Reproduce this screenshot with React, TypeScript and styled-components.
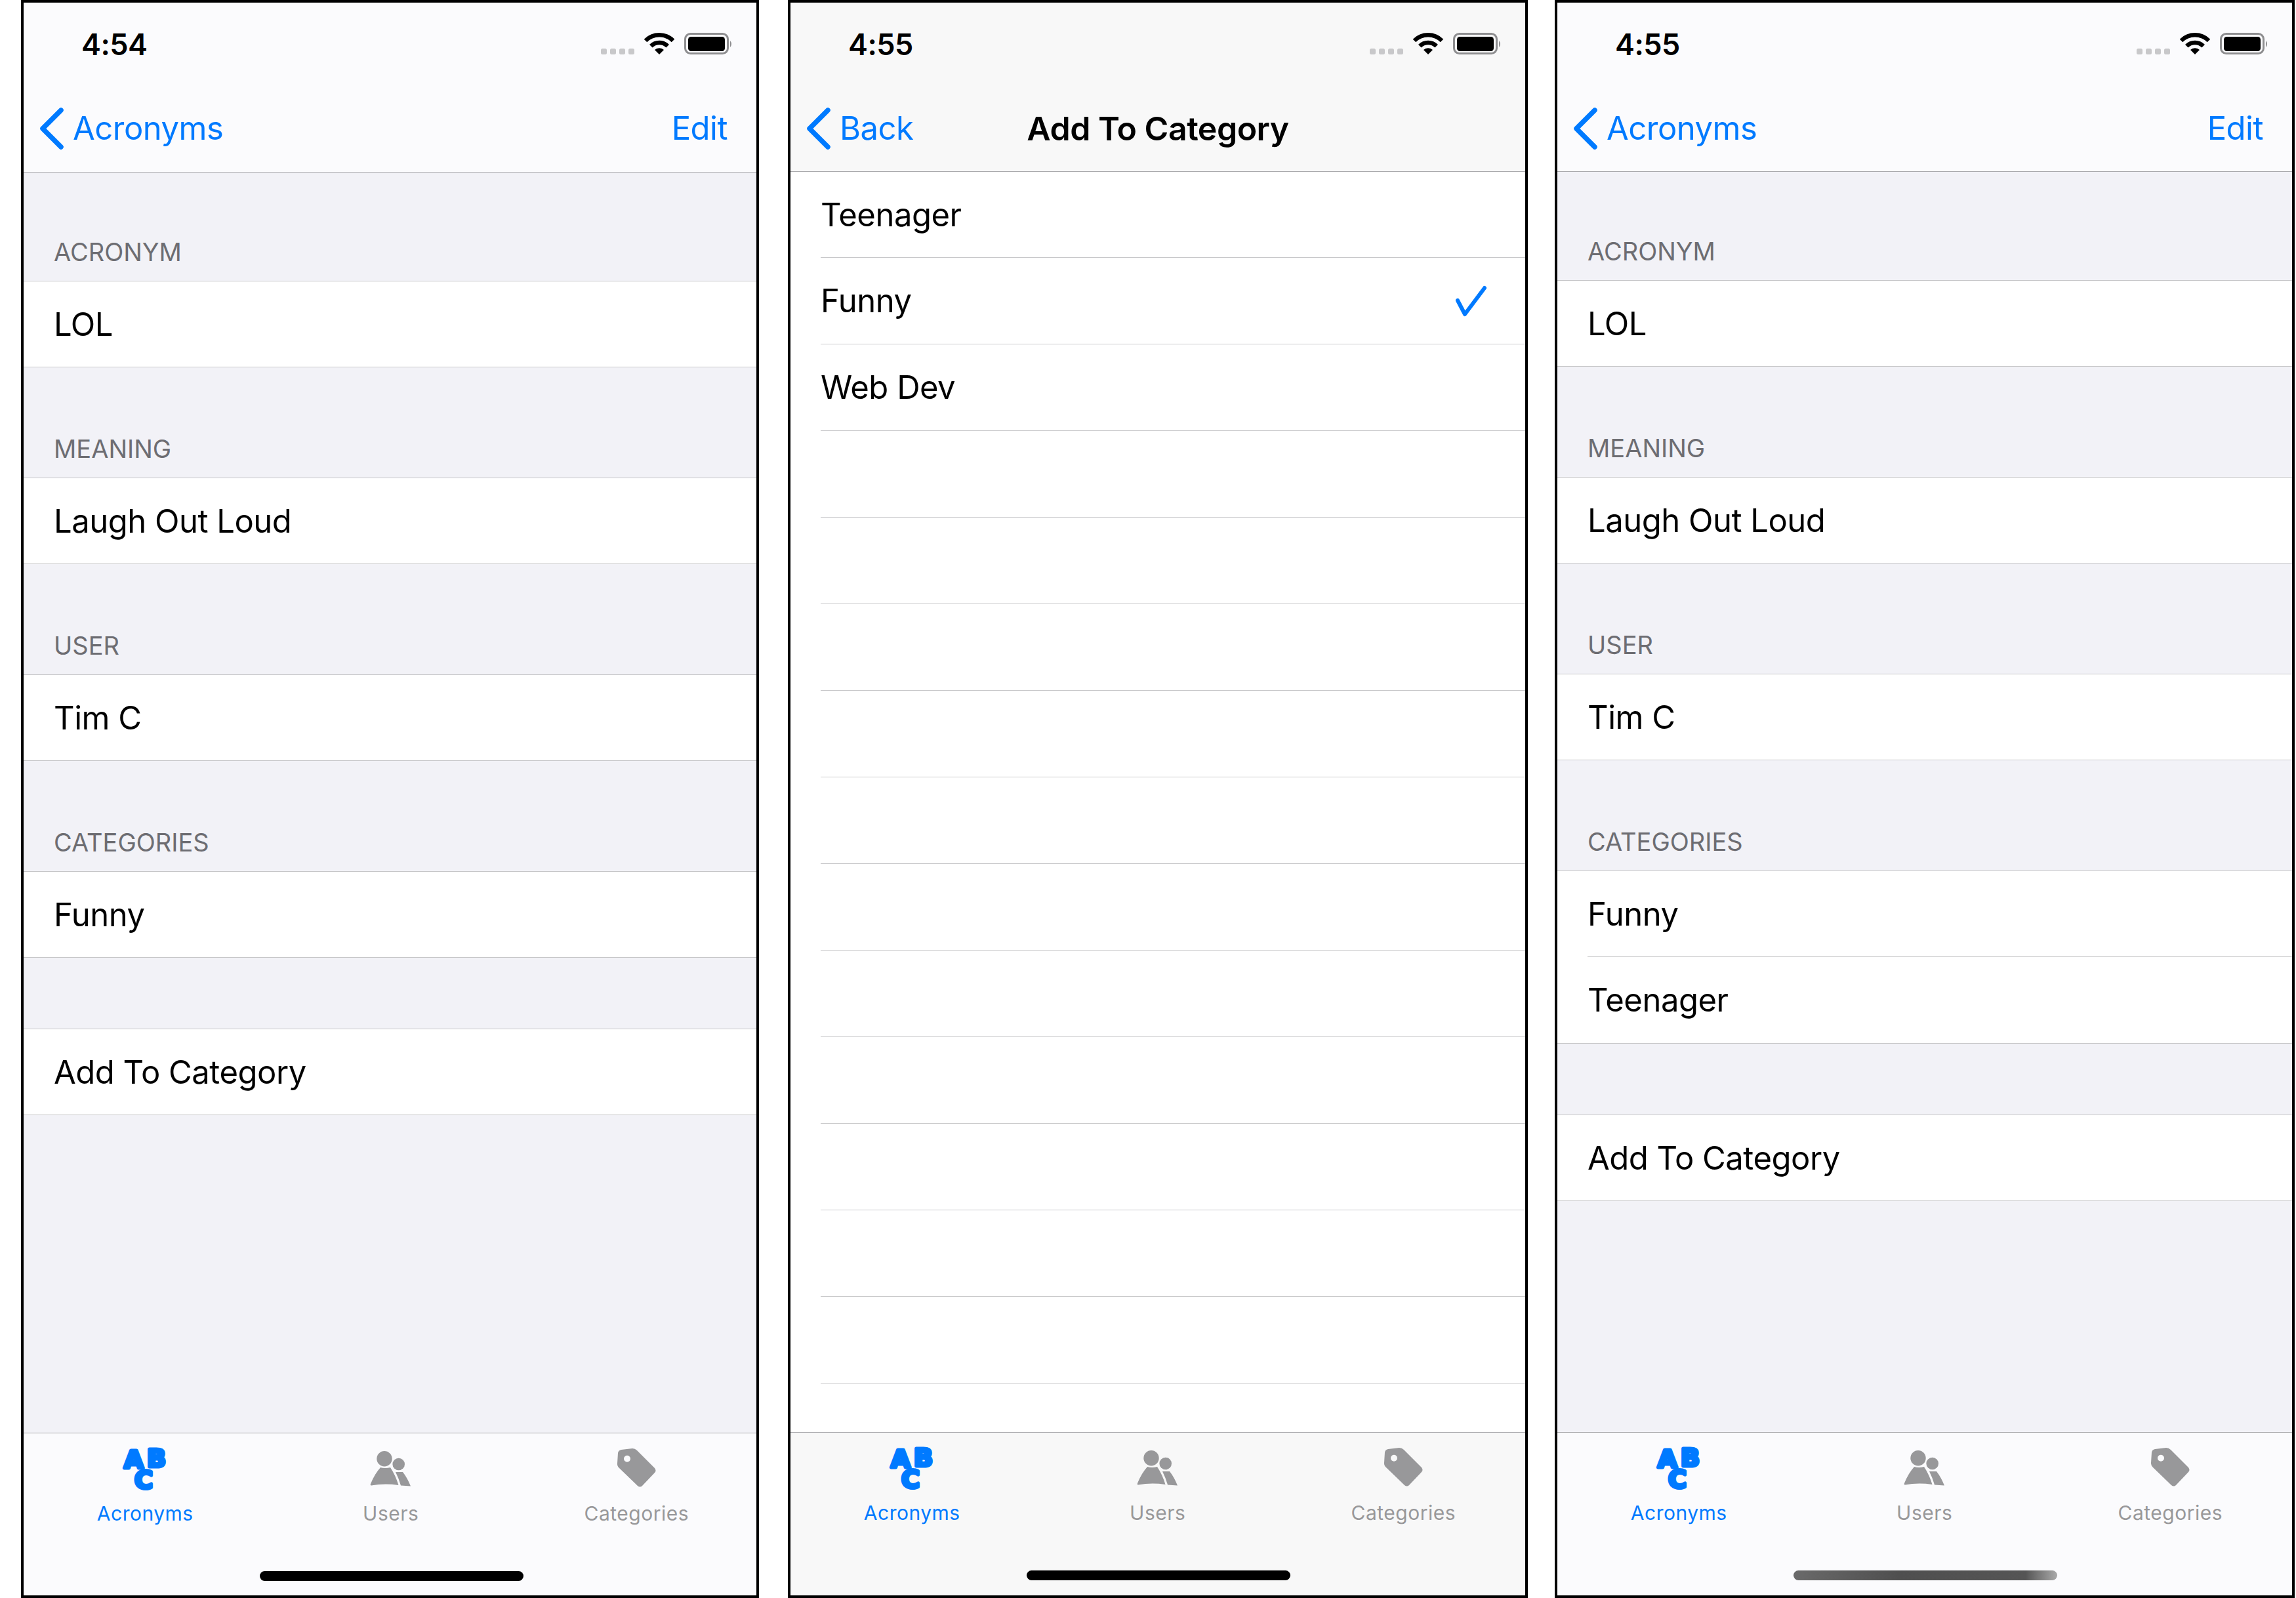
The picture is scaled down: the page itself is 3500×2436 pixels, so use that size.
import React from 'react';
import styled, { createGlobalStyle } from 'styled-components';

const GlobalStyle = createGlobalStyle`
  html, body {
    margin: 0;
    padding: 0;
    background: #fff;
  }
  body {
    font-family: Inter, "Liberation Sans", sans-serif;
    width: 3500px;
    height: 2436px;
    overflow: hidden;
  }
`;

const Page = styled.div`
  display: flex;
`;

const Phone = styled.div<{ $width: number; $left: number }>`
  box-sizing: border-box;
  flex: none;
  width: ${(p) => p.$width}px;
  margin-left: ${(p) => p.$left}px;
  height: 2436px;
  border: 4px solid #000;
  display: flex;
  flex-direction: column;
  overflow: hidden;
  background: #fff;
`;

const Header = styled.div<{ $bg: string; $height: number }>`
  background: ${(p) => p.$bg};
  border-bottom: 1px solid #a9a9ac;
  height: ${(p) => p.$height}px;
  box-sizing: border-box;
  flex: none;
`;

const StatusRow = styled.div`
  height: 126px;
  display: flex;
  align-items: center;
  justify-content: space-between;
  padding: 0 37px 0 88px;
`;

const Time = styled.div`
  font-size: 45px;
  font-weight: 600;
  color: #000;
  letter-spacing: -0.5px;
`;

const NavRow = styled.div`
  position: relative;
  height: 131px;
  display: flex;
  align-items: center;
  justify-content: space-between;
  padding: 0 44px 0 25px;
`;

const BackLink = styled.div`
  display: flex;
  align-items: center;
  gap: 10px;
  font-size: 49px;
  letter-spacing: -0.5px;
  color: #007aff;
`;

const NavTitle = styled.div`
  position: absolute;
  left: 0;
  right: 0;
  text-align: center;
  font-size: 50px;
  font-weight: 600;
  letter-spacing: -0.5px;
  color: #000;
`;

const EditLink = styled.div`
  font-size: 49px;
  letter-spacing: -0.5px;
  color: #007aff;
`;

const Grouped = styled.div`
  flex: 1;
  background: #f2f2f7;
  overflow: hidden;
`;

const Plain = styled.div`
  flex: 1;
  background: #fff;
  overflow: hidden;
`;

const SectionTitle = styled.div<{ $height: number }>`
  height: ${(p) => p.$height}px;
  box-sizing: border-box;
  display: flex;
  align-items: flex-end;
  padding: 0 46px 21px 46px;
  font-size: 38px;
  line-height: 46px;
  color: #6d6d72;
`;

const Group = styled.div`
  background: #fff;
  border-top: 1px solid #c6c6c8;
`;

const Row = styled.div`
  box-sizing: border-box;
  height: 132px;
  padding-left: 46px;
  display: flex;

  &:first-child {
    height: 131px;
  }
`;

const RowInner = styled.div<{ $line: string }>`
  flex: 1;
  box-sizing: border-box;
  display: flex;
  align-items: center;
  justify-content: space-between;
  padding-right: 59px;
  font-size: 49px;
  letter-spacing: -0.5px;
  color: #000;
  border-bottom: 1px solid ${(p) => p.$line};
`;

const FullRow = styled(Row)`
  padding-left: 0;
  ${RowInner} {
    padding-left: 46px;
  }
`;

const TabBar = styled.div<{ $bg: string; $height: number }>`
  flex: none;
  height: ${(p) => p.$height}px;
  box-sizing: border-box;
  background: ${(p) => p.$bg};
  border-top: 1px solid #a9a9ac;
  display: flex;
  flex-direction: column;
`;

const Tabs = styled.div`
  display: grid;
  grid-template-columns: repeat(3, 374.5px);
  margin-left: -2px;
  height: 210px;
`;

const Tab = styled.div<{ $active?: boolean }>`
  display: flex;
  flex-direction: column;
  align-items: center;
  color: ${(p) => (p.$active ? '#007aff' : '#98989a')};
`;

const TabIcon = styled.svg`
  display: block;
  width: 90px;
  height: 74px;
  margin-top: 17px;
  overflow: visible;
`;

const TabLabel = styled.div`
  font-size: 30px;
  line-height: 36px;
  font-weight: 400;
  letter-spacing: 0.5px;
  margin-top: 13px;
`;

const HomeIndicator = styled.div<{ $fade?: boolean }>`
  width: 402px;
  height: 15px;
  border-radius: 8px;
  margin-left: 360px;
  background: ${(p) =>
    p.$fade ? 'linear-gradient(90deg, #6a6a6a, #4f4f4f 40%, #555 88%, #aaa)' : '#000'};
`;

const StatusIcons = () => (
  <svg width="200" height="40" viewBox="0 0 200 40">
    <g fill="#c8c8ca">
      <rect x="0" y="27" width="9" height="9" rx="2.5" />
      <rect x="14" y="27" width="9" height="9" rx="2.5" />
      <rect x="28" y="27" width="9" height="9" rx="2.5" />
      <rect x="42" y="27" width="9" height="9" rx="2.5" />
    </g>
    <g fill="none" stroke="#000" strokeWidth="6.5">
      <path d="M68 15 A29.7 29.7 0 0 1 110 15" />
      <path d="M76.3 23.3 A18 18 0 0 1 101.7 23.3" />
    </g>
    <path d="M89 36 L82 29 A10 10 0 0 1 96 29 Z" fill="#000" />
    <rect x="128.5" y="4.5" width="65" height="30" rx="8" fill="none" stroke="#8e8e90" strokeWidth="3" />
    <rect x="133" y="9" width="56" height="22" rx="4.5" fill="#000" />
    <path d="M197 15 Q201 20 197 25 Z" fill="#8e8e90" />
  </svg>
);

const Chevron = () => (
  <svg width="40" height="66" viewBox="0 0 40 66">
    <path d="M32 5 L4 33 L32 61" fill="none" stroke="#007aff" strokeWidth="7.5" strokeLinecap="round" strokeLinejoin="round" />
  </svg>
);

const Check = () => (
  <svg width="48" height="48" viewBox="0 0 48 48">
    <path d="M4 23 L15 44 L45 4" fill="none" stroke="#007aff" strokeWidth="6" strokeLinecap="round" strokeLinejoin="round" />
  </svg>
);

const AbcIcon = () => (
  <TabIcon viewBox="0 0 90 74">
    <g
      fill="currentColor"
      stroke="currentColor"
      strokeWidth="5"
      strokeLinejoin="round"
      fontFamily="'DejaVu Sans', sans-serif"
      fontWeight="700"
      fontSize="38"
    >
      <text x="13" y="36">A</text>
      <text x="48" y="34">B</text>
      <text x="29" y="67">C</text>
    </g>
  </TabIcon>
);

const UsersIcon = () => (
  <TabIcon viewBox="0 0 90 74">
    <g fill="currentColor">
      <circle cx="35" cy="21.7" r="11.7" />
      <circle cx="56.7" cy="30" r="9.3" />
      <path d="M29 35 Q36 37 44 35 Q52 47 56.5 62 Q35 59 15 62.5 Q13 62.5 14 60 Q20 45 29 35 Z" />
      <path d="M52 42 L63 42 Q70 51 75 63.5 L60 62.5 Q57 52 52 42 Z" />
    </g>
  </TabIcon>
);

const TagIcon = () => (
  <TabIcon viewBox="0 0 90 74">
    <path
      fillRule="evenodd"
      fill="currentColor"
      d="M22 8 L39 6 Q43 6 46 9 L73 36 Q76 40 73 43 L54 63 Q50.7 66 47 63 L19 36 Q15.7 33 16 29 L17 13 Q17.5 9 22 8 Z M31 16.7 A5 5 0 1 0 31 26.7 A5 5 0 1 0 31 16.7 Z"
    />
  </TabIcon>
);

const Bottom = ({ bg, height, fade }: { bg: string; height: number; fade?: boolean }) => (
  <TabBar $bg={bg} $height={height}>
    <Tabs>
      <Tab $active>
        <AbcIcon />
        <TabLabel>Acronyms</TabLabel>
      </Tab>
      <Tab>
        <UsersIcon />
        <TabLabel>Users</TabLabel>
      </Tab>
      <Tab>
        <TagIcon />
        <TabLabel>Categories</TabLabel>
      </Tab>
    </Tabs>
    <HomeIndicator $fade={fade} />
  </TabBar>
);

type DetailProps = {
  time: string;
  rows: string[];
  width: number;
  left: number;
  headerHeight: number;
  tabHeight: number;
  fade?: boolean;
};

const Detail = ({ time, rows, width, left, headerHeight, tabHeight, fade }: DetailProps) => {
  const sections = [
    { title: 'ACRONYM', items: ['LOL'] },
    { title: 'MEANING', items: ['Laugh Out Loud'] },
    { title: 'USER', items: ['Tim C'] },
    { title: 'CATEGORIES', items: rows },
  ];
  return (
    <Phone $width={width} $left={left}>
      <Header $bg="#fbfbfd" $height={headerHeight}>
        <StatusRow>
          <Time>{time}</Time>
          <StatusIcons />
        </StatusRow>
        <NavRow>
          <BackLink>
            <Chevron />
            Acronyms
          </BackLink>
          <EditLink>Edit</EditLink>
        </NavRow>
      </Header>
      <Grouped>
        {sections.map((s, i) => (
          <React.Fragment key={s.title}>
            <SectionTitle $height={i === 0 ? 165 : 168}>{s.title}</SectionTitle>
            <Group>
              {s.items.map((item, j) =>
                j === s.items.length - 1 ? (
                  <FullRow key={item}>
                    <RowInner $line="#c6c6c8">{item}</RowInner>
                  </FullRow>
                ) : (
                  <Row key={item}>
                    <RowInner $line="#c6c6c8">{item}</RowInner>
                  </Row>
                ),
              )}
            </Group>
          </React.Fragment>
        ))}
        <SectionTitle $height={108} />
        <Group>
          <FullRow>
            <RowInner $line="#c6c6c8">Add To Category</RowInner>
          </FullRow>
        </Group>
      </Grouped>
      <Bottom bg="#fbfbfd" height={tabHeight} fade={fade} />
    </Phone>
  );
};

const Picker = () => {
  const names = ['Teenager', 'Funny', 'Web Dev', '', '', '', '', '', '', '', '', '', '', ''];
  return (
    <Phone $width={1128} $left={44}>
      <Header $bg="#f8f8f8" $height={258}>
        <StatusRow>
          <Time>4:55</Time>
          <StatusIcons />
        </StatusRow>
        <NavRow>
          <BackLink>
            <Chevron />
            Back
          </BackLink>
          <NavTitle>Add To Category</NavTitle>
        </NavRow>
      </Header>
      <Plain>
        {names.map((name, i) => (
          <Row key={i}>
            <RowInner $line="#c8c8ca">
              {name}
              {name === 'Funny' && <Check />}
            </RowInner>
          </Row>
        ))}
      </Plain>
      <Bottom bg="#f8f8f8" height={249} />
    </Phone>
  );
};

export default function App() {
  return (
    <>
      <GlobalStyle />
      <Page>
        <Detail time="4:54" rows={['Funny']} width={1125} left={32} headerHeight={259} tabHeight={248} />
        <Picker />
        <Detail time="4:55" rows={['Funny', 'Teenager']} width={1128} left={41} headerHeight={258} tabHeight={249} fade />
      </Page>
    </>
  );
}
